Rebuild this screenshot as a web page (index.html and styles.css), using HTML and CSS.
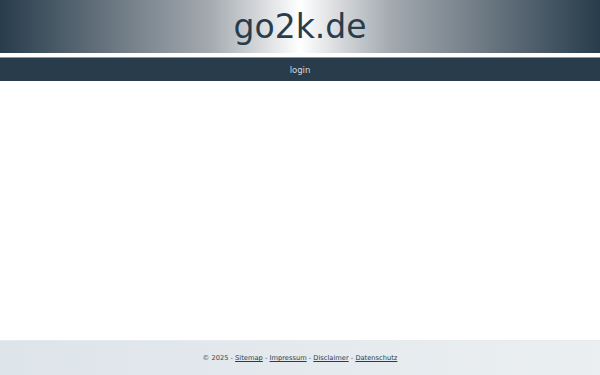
FILE: index.html
```html
<!DOCTYPE html>
<html lang="de">
<head>
    <meta charset="UTF-8">
    <meta name="viewport" content="width=device-width, initial-scale=1.0">
    <title>go2k.de</title>
    <link rel="stylesheet" href="styles.css">
</head>
<body>
    <div class="page">
        <header class="header">
            <h1>go2k.de</h1>
        </header>
        <nav class="nav">
            <a href="#">login</a>
        </nav>
        <main class="content"></main>
        <footer class="footer">
            <p>&copy; 2025 - <a href="#">Sitemap</a> - <a href="#">Impressum</a> - <a href="#">Disclaimer</a> - <a href="#">Datenschutz</a></p>
        </footer>
    </div>
</body>
</html>
```

FILE: styles.css
```css
body {
    margin: 0;
    font-family: "DejaVu Sans", sans-serif;
    background-color: #fff;
}
.page {
    display: flex;
    flex-direction: column;
    height: 100vh;
}
.header {
    height: 53px;
    background: linear-gradient(to right, #283c4b 0%, #a4aab0 35%, #ffffff 50%, #a4aab0 65%, #283c4b 100%);
    display: flex;
    align-items: center;
    justify-content: center;
}
.header h1 {
    margin: 0;
    font-weight: normal;
    font-size: 33px;
    color: #283c4b;
    line-height: 1;
}
.nav {
    margin-top: 4px;
    border-top: 1px solid #8a959e;
    height: 23px;
    background-color: #283c4b;
    display: flex;
    align-items: center;
    justify-content: center;
}
.nav a {
    color: #d4dadf;
    font-size: 8.5px;
    text-decoration: none;
}
.content {
    flex: 1;
}
.footer {
    height: 34px;
    background: linear-gradient(to right, #dde4ea, #ebeff1);
    border-top: 1px solid #e8ebee;
    display: flex;
    align-items: center;
    justify-content: center;
}
.footer p {
    margin: 0;
    font-size: 6.7px;
    color: #444;
}
.footer a {
    color: #283c4b;
}
```
